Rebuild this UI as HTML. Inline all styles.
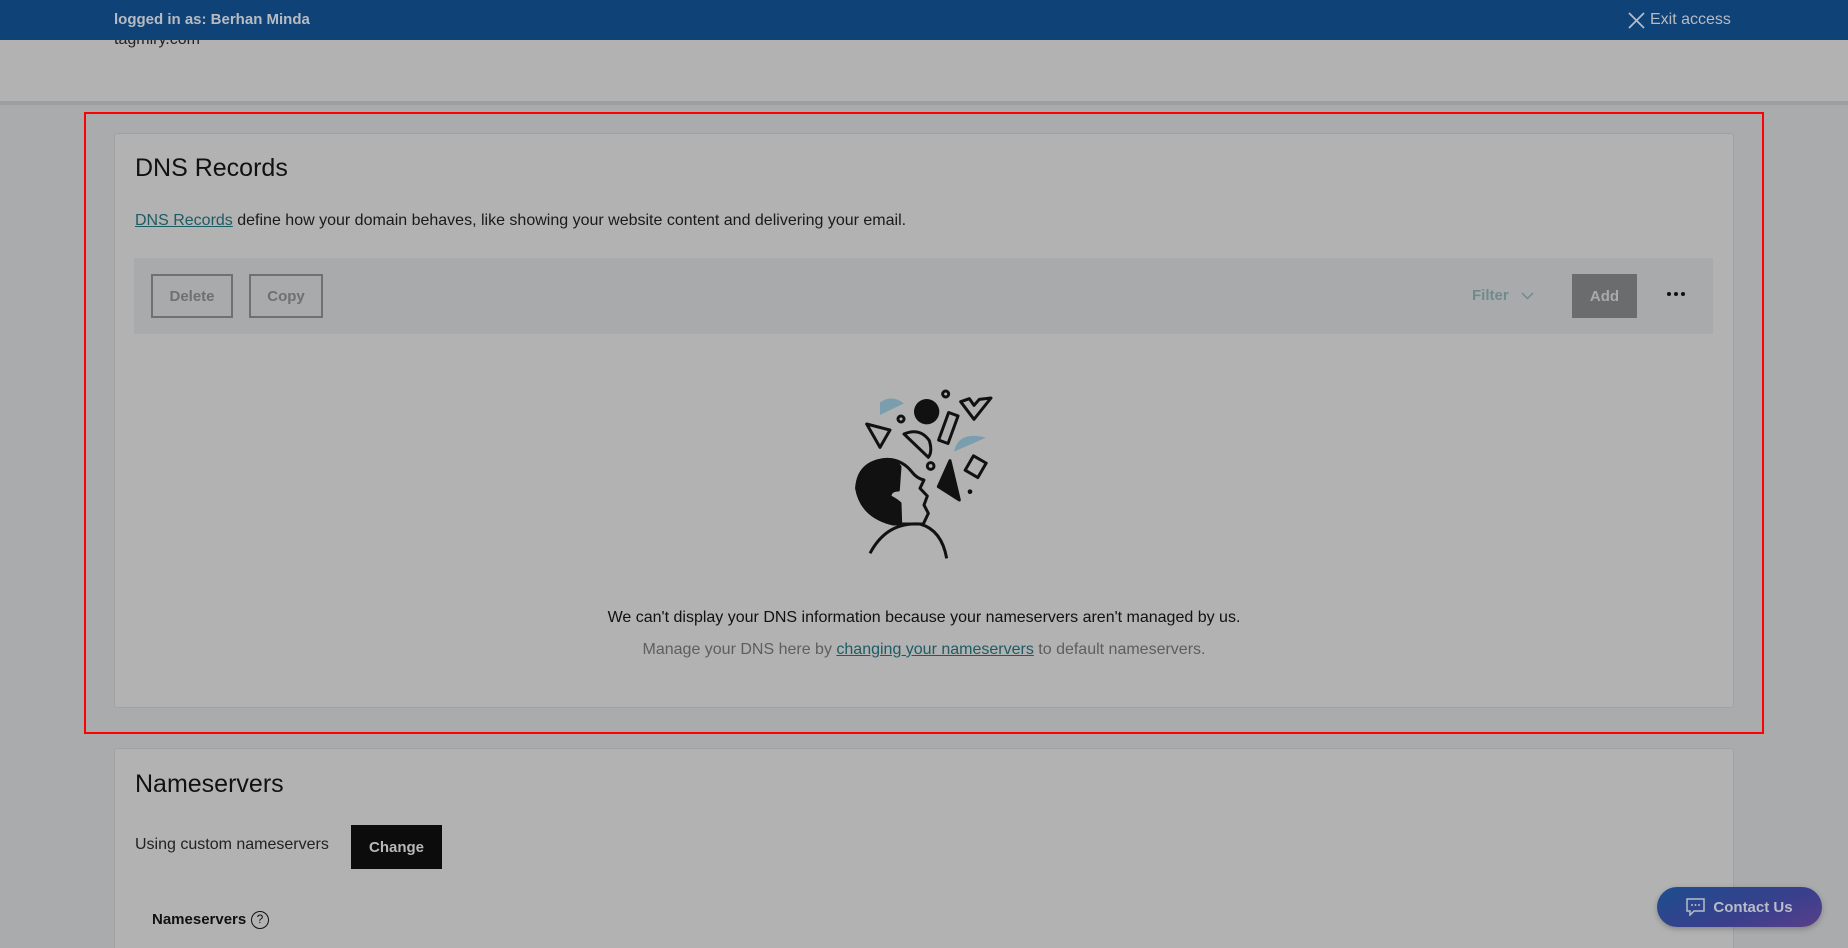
<!DOCTYPE html>
<html><head><meta charset="utf-8"><style>
*{box-sizing:border-box;margin:0;padding:0}
html{width:1848px;height:948px;overflow:hidden}
body{width:1848px;height:948px;overflow:hidden;background:#aaabac;font-family:"Liberation Sans",Arial,sans-serif;position:relative;color:#111}
.abs{position:absolute}
.topbar{left:0;top:0;width:1848px;height:40px;background:#0f4277;color:#b8bcc2;font-size:15px}
.hdr{left:0;top:40px;width:1848px;height:61px;background:#b2b2b2}
.hline{left:0;top:101px;width:1848px;height:4px;background:#9d9e9f}
.card{background:#b2b2b2;border:1px solid #a0a1a2;border-radius:3px}
.btn{border:2px solid #6f7071;color:#6f7071;font-weight:bold;font-size:15px;display:flex;align-items:center;justify-content:center}
</style></head><body>
<div class="abs hdr"></div>
<div class="abs" style="left:114px;top:31px;font-size:16px;color:#222">tagmiry.com</div>
<div class="abs topbar">
 <div class="abs" style="left:114px;top:11px;font-weight:bold">logged in as: Berhan Minda</div>
 <svg class="abs" style="left:1628px;top:12px" width="17" height="17" viewBox="0 0 17 17"><path d="M1 1L16 16M16 1L1 16" stroke="#b8bcc2" stroke-width="1.8"/></svg>
 <div class="abs" style="left:1650px;top:11px;font-size:16px">Exit access</div>
</div>
<div class="abs hline"></div>
<div class="abs" style="left:84px;top:112px;width:1680px;height:622px;border:2px solid #f00"></div>

<div class="abs card" style="left:114px;top:133px;width:1620px;height:575px"></div>
<div class="abs" style="left:135px;top:154px;font-size:25px;color:#111">DNS Records</div>
<div class="abs" style="left:135px;top:212px;font-size:16px;color:#1a1a1a"><span style="color:#1d5c63;text-decoration:underline">DNS Records</span> define how your domain behaves, like showing your website content and delivering your email.</div>
<div class="abs" style="left:134px;top:258px;width:1579px;height:76px;background:#a9aaab"></div>
<div class="abs btn" style="left:151px;top:274px;width:82px;height:44px">Delete</div>
<div class="abs btn" style="left:249px;top:274px;width:74px;height:44px">Copy</div>
<div class="abs" style="left:1472px;top:287px;font-size:15px;font-weight:bold;color:#6f8c8c">Filter</div>
<svg class="abs" style="left:1521px;top:292px" width="13" height="8" viewBox="0 0 13 8"><path d="M1 1L6.5 6.5L12 1" stroke="#6f8c8c" stroke-width="1.5" fill="none"/></svg>
<div class="abs" style="left:1572px;top:274px;width:65px;height:44px;background:#6b6c6d;color:#aaa;font-weight:bold;font-size:15px;display:flex;align-items:center;justify-content:center">Add</div>
<div class="abs" style="left:1667px;top:292px;display:flex;gap:3px"><i style="width:4px;height:4px;border-radius:50%;background:#111"></i><i style="width:4px;height:4px;border-radius:50%;background:#111"></i><i style="width:4px;height:4px;border-radius:50%;background:#111"></i></div>

<svg class="abs" style="left:830px;top:370px" width="180" height="200" viewBox="0 0 540 600">
<g stroke="#111" stroke-width="9" fill="none" stroke-linejoin="round">
<path d="M150 135L150 98Q185 72 222 100Z" fill="#7a9eae" stroke="none"/>
<circle cx="213" cy="147" r="9"/>
<circle cx="290" cy="125" r="38" fill="#111" stroke="none"/>
<circle cx="347" cy="72" r="9"/>
<path d="M392 95L432 148L483 84L448 88L432 106L418 86Z"/>
<path d="M110 162L180 180L150 232Z"/>
<path d="M222 192Q270 172 298 212Q308 245 295 262Z"/>
<rect x="340" y="130" width="30" height="88" transform="rotate(20 355 174)"/>
<path d="M372 245Q385 182 468 203Z" fill="#7a9eae" stroke="none"/>
<circle cx="302" cy="288" r="10"/>
<rect x="415" y="265" width="44" height="50" transform="rotate(30 437 290)"/>
<path d="M325 350L360 272L388 390Z" fill="#111"/>
<circle cx="420" cy="365" r="7" fill="#111" stroke="none"/>
<path d="M190 462Q95 440 80 355Q85 275 170 268Q215 268 245 305Q260 325 282 330L270 355L292 378L282 405L295 430L280 462Z"/>
<path d="M190 462Q95 440 80 355Q85 275 170 268Q195 268 210 290L205 360Q180 360 180 380Q200 390 210 400L212 460Z" fill="#111"/>
<path d="M120 550Q170 455 270 462Q335 480 350 565"/>
</g></svg>

<div class="abs" style="left:0;top:609px;width:1848px;text-align:center;font-size:16px;color:#111">We can't display your DNS information because your nameservers aren't managed by us.</div>
<div class="abs" style="left:0;top:641px;width:1848px;text-align:center;font-size:16px;color:#5d5e60">Manage your DNS here by <span style="color:#1d5c63;text-decoration:underline">changing your nameservers</span> to default nameservers.</div>

<div class="abs card" style="left:114px;top:748px;width:1620px;height:205px"></div>
<div class="abs" style="left:135px;top:770px;font-size:25px;color:#111">Nameservers</div>
<div class="abs" style="left:135px;top:836px;font-size:16px;color:#222">Using custom nameservers</div>
<div class="abs" style="left:351px;top:825px;width:91px;height:44px;background:#0c0c0c;color:#b8b8b8;font-weight:bold;font-size:15px;display:flex;align-items:center;justify-content:center">Change</div>
<div class="abs" style="left:152px;top:911px;font-size:15px;font-weight:bold;color:#111">Nameservers</div>
<div class="abs" style="left:251px;top:911px;width:18px;height:18px;border:1.5px solid #111;border-radius:50%;font-size:12px;text-align:center;line-height:15px">?</div>

<div class="abs" style="left:1657px;top:887px;width:165px;height:40px;border-radius:20px;background:linear-gradient(160deg,#1d4e8f,#3a3f8c 60%,#5a3f8a);box-shadow:0 2px 6px rgba(0,0,0,.25);color:#b8bcc8;font-weight:bold;font-size:15px;display:flex;align-items:center;justify-content:center;gap:8px">
<svg width="19" height="18" viewBox="0 0 19 18"><path d="M1 1H18V13H8L4 17V13H1Z" fill="none" stroke="#b8bcc8" stroke-width="1.5"/><circle cx="6" cy="7" r="1" fill="#b8bcc8"/><circle cx="9.5" cy="7" r="1" fill="#b8bcc8"/><circle cx="13" cy="7" r="1" fill="#b8bcc8"/></svg>Contact Us</div>
</body></html>
